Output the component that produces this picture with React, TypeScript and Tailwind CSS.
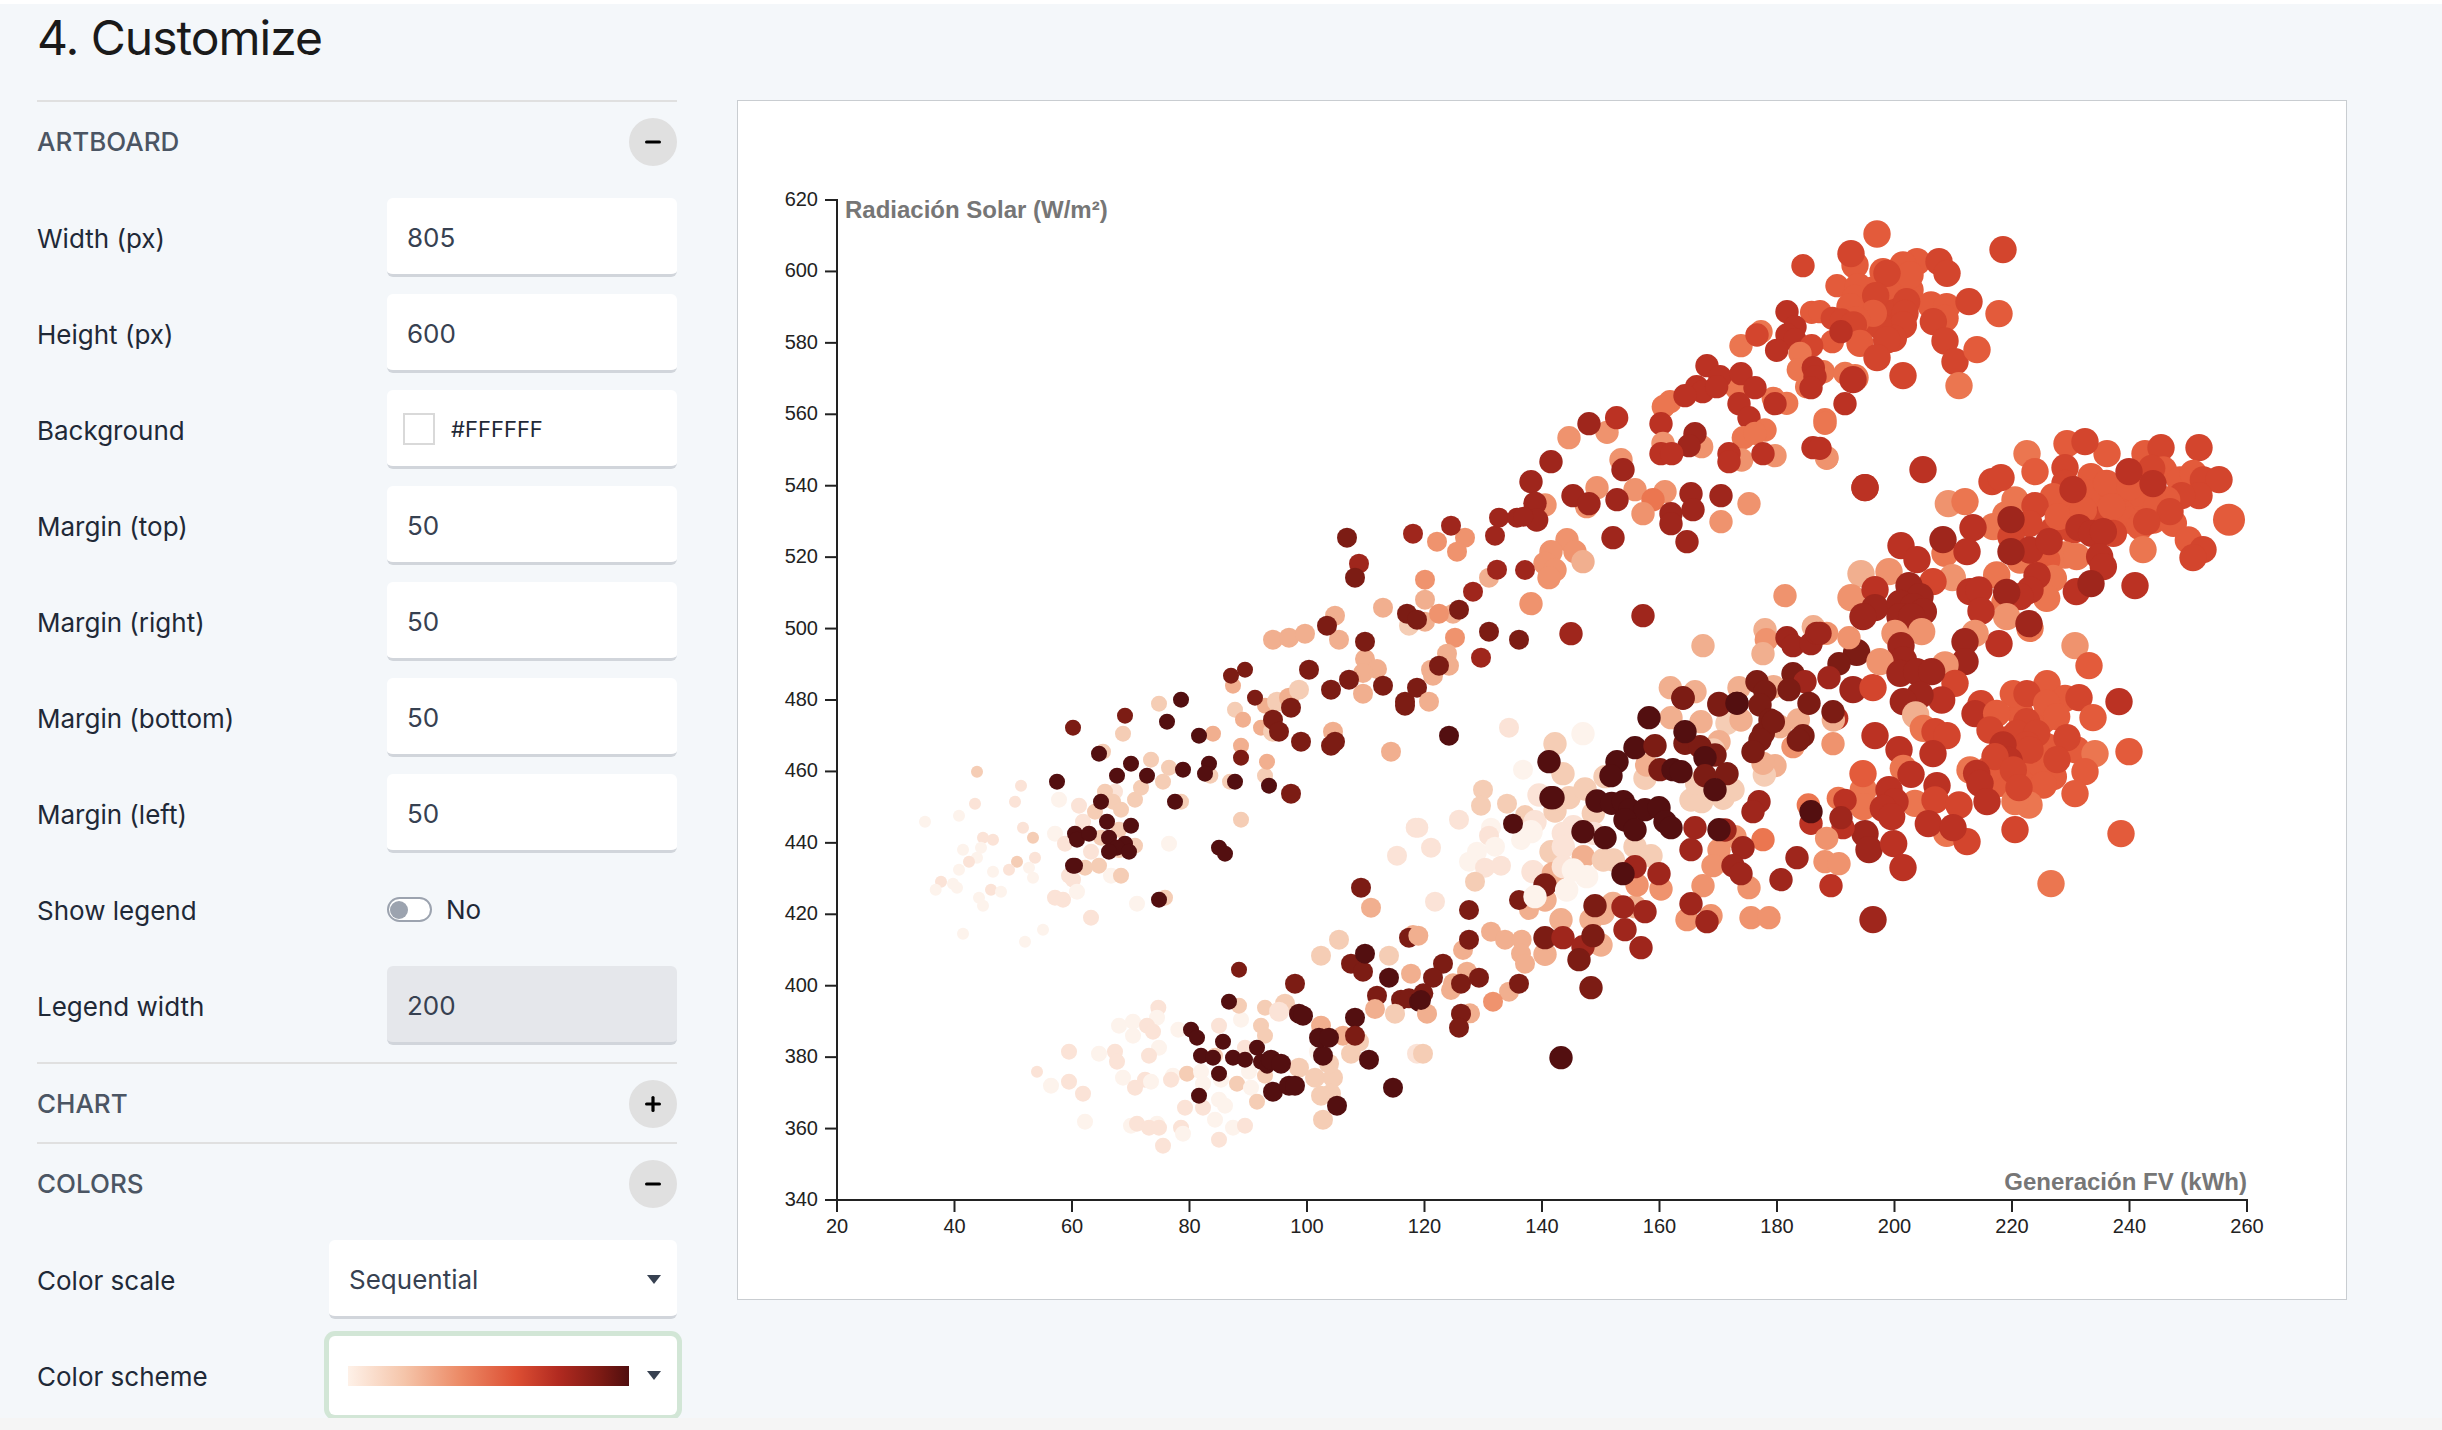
import { Minus, Plus } from 'lucide-react';
import type { ReactNode } from 'react';

const SHADES: Record<string, string> = {
  a: '#fdf3ec',
  b: '#fbe3d7',
  c: '#f5cdb5',
  d: '#f1af8f',
  e: '#ef936e',
  f: '#eb7650',
  g: '#e35b3b',
  h: '#d3452d',
  i: '#bb3223',
  j: '#9f261c',
  k: '#7c1c14',
  l: '#530f10',
};

// dots traced from the chart at 3x, grouped by the area they were read from
const TRACES: { ox: number; oy: number; pts: string }[] = [
  {
    ox: 900,
    oy: 640,
    pts: `231,395,c 363,437,b 225,491,b 345,485,b 177,527,a 75,545,a 369,563,b 399,593,c 249,593,b 279,599,b 189,629,a 243,623,a 231,653,a 207,665,b 405,653,b 351,665,c 327,689,b 177,689,a 279,695,a 387,683,a 399,713,a 123,725,b 159,731,a 171,743,a 107,749,a 273,749,b 303,755,a 237,773,a 249,797,a 189,881,a 429,869,a 375,905,a
    477,479,a 537,497,b 465,581,a 495,611,b 549,545,b 585,515,c 645,455,b 615,455,c 639,485,c 663,509,c 573,635,b 657,569,c 603,593,c 705,479,c 723,443,c 753,359,c 807,383,c 789,425,c 807,611,a 843,485,c 669,281,c 777,191,c 609,335,c 597,677,c 555,683,c 507,707,b 519,719,b 633,707,a 663,707,c 531,755,a 465,773,b 489,779,b 573,833,b 711,791,a 795,773,c 705,617,c 657,630,c 939,281,d 931,407,c 990,425,c
    519,263,k 675,227,k 801,245,l 843,179,l 897,287,l 597,341,l 693,371,l 651,407,l 741,407,l 849,389,l 927,371,l 915,401,l 471,425,l 603,485,l 825,485,l 621,545,l 693,557,l 525,581,l 531,599,l 567,581,l 627,593,l 675,611,l 651,623,l 627,635,l 687,635,l 519,677,l 525,677,l 777,779,l 957,623,l 975,641,l 1005,425,l
    1023,539,c 999,137,d 1005,209,c 1029,239,d 1023,317,d 1083,263,d 1095,197,d 1131,185,c 1167,173,d 1197,149,c 1395,57,d 1431,87,d 1389,99,d 1389,161,d 1095,407,c 1119,275,c 1101,365,d 1299,275,d 1473,335,d
    993,107,k 1035,89,k 1227,89,k 1347,119,k 1293,149,k 1449,137,k 1065,173,k 1173,203,k 1119,239,k 1137,275,k 1203,305,k 1293,317,k 1305,305,k 1023,353,k 1107,437,l 1173,461,k 1515,185,k 1515,197,k 1551,143,k
    1547,563,b 1491,647,b 1413,803,d 1383,743,k
    1539,885,d 1317,899,c 1263,947,c 1467,947,c 1533,1001,d 1353,971,k 1389,995,k 1395,941,l 1527,893,k 1467,1013,l 1185,1031,k 1017,989,k 1431,1067,k 1503,1079,k 1527,1075,k 1557,1085,l
    1425,1107,d 1485,1121,c 1095,1103,c 1155,1091,c 1137,1115,b 1023,1139,a 1017,1097,c 775,1103,b 771,1133,a 657,1157,a 699,1145,a 699,1187,a 741,1157,b 759,1175,b 835,1169,a 957,1157,b 1083,1157,c 1095,1187,c 1263,1157,d 1329,1187,d 1035,1223,b 945,1247,c 1353,1241,c 1377,1205,c 777,1223,a 747,1247,b 645,1235,b 651,1265,b 597,1241,a 507,1235,b 411,1295,b 507,1325,b 453,1337,a 549,1361,b 669,1313,a 735,1319,b 753,1325,a 705,1343,b 819,1307,a 813,1319,b 861,1301,c 903,1295,a 909,1331,a 963,1319,a 1011,1331,c 1047,1295,a 1095,1307,c 1053,1343,a 1197,1283,c 1245,1313,c 1299,1313,c 1287,1271,c 1257,1235,a 1293,1361,c 1263,1367,c 1071,1385,c 957,1379,a 975,1397,a 855,1403,b 909,1403,b 555,1445,a 693,1457,a 711,1451,b 771,1451,a 747,1463,b 777,1463,b 843,1463,b 849,1481,a 945,1439,a 999,1463,a 1035,1457,b 957,1499,b 789,1517,b 1269,1439,c 1551,1241,b
    987,1085,l 873,1169,l 891,1193,l 969,1205,l 903,1247,l 939,1253,l 999,1253,l 1035,1259,l 1071,1223,l 1083,1265,l 1101,1277,l 1113,1259,l 1143,1271,l 957,1301,l 897,1367,l 1119,1355,l 1167,1337,l 1185,1337,l 1311,1397,l 1479,1343,l 1407,1259,l 1269,1247,l 1257,1193,l 1287,1193,l 1365,1133,l 1365,1187,k 1197,1121,l 1209,1127,l`,
  },
  {
    ox: 1100,
    oy: 500,
    pts: `519,419,d 567,413,d 615,401,d 705,347,d 717,419,d 849,323,d 927,377,c 975,365,d 975,299,d 975,239,e 1011,125,e 1095,113,e 1071,155,e 1059,341,d 1017,341,e 1065,413,e 1167,233,d 1041,461,d 1047,497,d 993,509,d 999,527,d 987,605,d
    681,377,k 741,113,k 777,191,j 765,233,k 939,101,j 1053,77,j 1185,107,j 1197,53,j 1251,53,j 1191,209,j 1119,275,j 921,341,k 951,359,k 1077,329,k 1167,395,k 1257,419,k 795,425,k 1017,497,k 1143,473,j`,
  },
  {
    ox: 1520,
    oy: 210,
    pts: `1100,330,h 1130,340,h 1040,330,g 1100,360,h 1090,280,h 1030,290,g 1060,240,g 1170,240,g 1100,230,g
    1071,72,g 1005,165,g 993,131,h 849,167,h 1449,119,h 1191,155,g 1149,165,g 1170,195,g 1089,185,g 1101,190,h 1257,155,h 1281,190,h 951,227,g 1015,230,g 1005,265,g 1067,257,h 1233,285,g 1280,290,g 1347,275,h 1437,311,g 1275,325,g 1240,335,h 1160,275,h 1155,310,h 1150,345,h 1120,385,h 1075,345,h 1060,310,g 990,290,g 1010,330,g 875,307,g 900,305,g 937,325,h 965,330,h 1000,345,h 937,395,g 1020,400,g 963,365,i 801,305,i 825,351,i 801,375,i 825,390,i 770,421,i 875,407,h 1100,390,h 1071,443,h 1149,497,h 1275,393,h 1305,455,h 1371,419,g 1317,527,f
    723,365,f 663,407,f 711,375,h
    840,430,f 835,479,f 910,485,f 860,530,f 880,473,i 885,500,i 873,533,i 975,490,f 1005,503,f 999,509,i
    650,535,f 450,575,f 430,590,f 760,565,f 800,580,f 561,467,i 600,500,i 663,491,i 705,533,i 530,530,i 548,545,i 590,530,i 495,557,i 423,641,i
    657,581,i 687,623,i 765,581,i
    975,581,i 915,629,f
    261,667,e 290,623,i 207,641,j 147,683,e
    429,700,e 545,710,e 525,671,j 507,707,j 423,731,i 455,731,i
    735,660,f 670,683,f 705,670,f
    665,750,e 627,731,i 627,755,i 765,737,e 729,731,i
    921,743,e 879,713,i
    303,749,e 93,755,j 309,779,j 33,815,j 75,885,e 45,880,j 50,930,j 10,920,j
    231,833,e 345,839,e 435,845,e 399,869,f 369,911,e 200,890,e 159,857,j 207,881,j 291,869,j 513,851,j 519,899,j 603,857,j 687,881,e 453,911,j 453,941,j 603,935,e 279,983,j 501,995,j
    141,989,e 93,1025,e 165,1025,e 189,1055,d 75,1060,e 105,1080,e 87,1103,e 15,1080,j 33,1181,e
    369,1217,j 153,1271,j 795,1157,e 1035,833,i
    549,1307,d 735,1259,d 739,1289,e 729,1331,d 880,1250,d 905,1270,e 801,1283,j 819,1307,j 873,1301,j 890,1270,j
    451,1433,d 525,1445,d 657,1433,d 761,1430,d 711,1415,k 735,1445,k 819,1391,k 855,1415,j 807,1439,k 489,1463,k 597,1480,k 651,1480,l`,
  },
  {
    ox: 1420,
    oy: 700,
    pts: `267,83,b 489,101,a 405,131,c 309,209,a 429,221,c 189,269,c 183,317,c 261,311,c 117,359,b -5,383,b 33,443,b 213,383,a 207,407,b 171,455,a 147,485,a 195,503,b 243,497,b 165,545,c 45,605,b 357,285,b 447,293,c 315,345,c 345,365,b 405,333,c 333,395,a 303,420,a 393,455,c 430,400,b 430,440,b 460,380,b 495,267,c 555,230,c 520,340,c 520,400,b 339,515,b 400,520,d 430,500,b 490,470,d 327,630,d 375,600,d 423,659,d 513,659,d 549,640,d 579,610,d 645,620,d 651,555,e 723,567,e 550,480,c 580,480,c 645,440,c 693,467,c 675,235,c 680,195,d 753,53,d 843,65,d 921,70,c 963,60,d 1065,197,d 1033,225,c 1029,190,d 813,300,c 845,305,c 909,295,c 939,270,c 830,250,c 1119,140,e 1135,60,d 1080,80,d 897,125,d 880,150,c
    897,450,e 879,497,e 849,557,e 987,563,e 945,410,e 1029,419,f 801,659,e 873,647,e 993,653,e 1047,653,e 1165,315,f
    213,695,d 255,719,d 305,719,d 303,761,d 315,791,d 375,763,d 129,750,d 141,815,d 543,735,d 267,875,d 219,905,e 99,850,d 93,870,d 150,940,d 21,941,d 9,1061,c -5,707,d
    87,107,l 387,185,l 393,293,l 399,293,l 279,371,l 591,185,l 573,227,l 645,143,l 687,53,l 705,137,k 795,130,k 840,140,k 885,165,k 795,95,l 855,173,l 720,209,k 759,209,l 783,215,l 855,227,k 921,221,k 885,269,l 531,303,l 575,310,l 610,305,l 630,330,l 675,329,l 717,323,l 615,360,l 645,389,l 735,365,l 753,383,l 489,395,l 555,413,l 825,383,j 813,449,j 915,390,j 897,389,l 1017,305,j 999,335,j 1173,370,i 1173,335,l 969,443,j 939,497,j 963,521,j
    645,500,j 609,521,l 717,521,j 375,555,k 297,600,k 147,630,k 525,617,k 609,621,j 675,635,j 615,689,j 663,743,j 147,719,k 375,713,k 429,713,j 489,740,j 519,707,k 477,779,k 69,791,k 39,833,k 123,851,k 177,833,k 297,851,k 513,863,k 10,880,k 3,900,l 123,941,k 117,983,k 423,1073,l 813,611,j 861,665,j 1083,539,j 1131,473,j
    789,-5,k 897,15,k 951,10,l 1020,15,k 1050,60,k 1030,100,k 1060,65,k 1020,120,k 999,155,k 1149,107,k 1135,120,k 1167,10,k
    460,510,a 500,530,a 440,570,a 345,590,a 225,440,a`,
  },
  {
    ox: 1820,
    oy: 420,
    pts: `830,230,g 900,250,g 950,270,g 1000,300,g 840,300,h 760,260,g 700,330,h 920,300,g 840,190,g 760,330,h 960,220,g 600,1000,h 650,1000,g 560,960,h 680,980,g 640,1060,g 600,880,g 670,900,g 540,1090,g 700,1070,g
    621,101,f 645,155,g 741,71,g 861,101,g 795,65,h 975,101,g 1023,83,h 1137,83,h 813,170,g 735,143,h 735,190,h 700,230,g 585,240,f 557,285,f 520,320,f 645,257,h 715,290,g 800,220,g 860,190,g 930,200,g 1030,150,g 995,145,h 1080,180,g 1120,160,g 1150,180,h 1197,179,h 1137,227,h 1085,227,h 1040,240,g 1010,260,g 1060,310,g 1050,275,h 960,320,g 980,305,h 1105,360,g 1149,389,h 1119,413,h 1227,299,g 969,389,f 875,260,g 790,270,g 880,340,h 927,155,i 999,191,i 759,209,i 627,311,h 573,350,h 573,299,j 777,323,i 815,340,i 850,335,i 735,405,f 770,410,f 600,420,f 680,420,g 630,390,i 687,365,i 573,395,j 839,410,i 850,440,i 700,475,f 680,535,f 530,465,f 555,545,f 651,467,i 630,510,i 600,530,i 560,517,j 769,515,i 813,491,j 945,497,i 560,590,e 630,625,f 627,611,j 537,671,i 765,677,e 807,737,g
    135,203,i 309,149,i 385,251,e 435,245,f 516,185,h 543,173,h 375,400,f 369,359,j 459,323,i 441,395,i 243,377,i 291,419,i 123,461,d 207,455,e 397,473,e 339,485,h 93,533,e 165,509,i 165,563,j 129,590,j 267,497,j 300,530,j 240,550,j 280,560,j 310,575,j 240,590,j 275,590,j 450,515,i 477,510,i 483,573,i 465,640,e 305,635,e 225,640,e 435,665,j 435,725,j 243,677,j 250,720,j 110,697,k 87,653,e 57,731,k 27,773,j 99,809,j 159,803,h 180,725,e 375,735,e 405,790,h 240,760,j 290,755,j 335,755,j 365,840,i 300,825,j 250,845,j 287,885,d 50,895,i 40,900,d 39,875,k 39,971,e 310,925,f 345,935,h 381,947,h 165,947,i 237,989,i 339,1001,i
    580,821,g 681,791,g 735,835,g 621,821,h 483,851,h 465,881,i 777,833,h 897,845,i 819,893,g 680,850,g 710,890,g 530,880,g 510,930,h 620,905,h 590,940,h 650,940,h 620,975,h 549,975,i 770,990,g 825,1001,f 741,953,h 660,1030,g 630,990,h 711,1019,h 567,1021,i 927,995,g 795,1055,g 765,1121,g 505,1050,g 525,1010,h 580,1050,h 670,1095,g 627,1155,f 585,1145,f 597,1103,h 585,1229,h 903,1241,g 693,1391,f
    130,1110,f 129,1061,g 130,1160,f 250,1045,f 285,1150,f 450,1050,f 380,1240,f 273,1063,i 351,1097,i 207,1109,i 225,1145,i 190,1165,i 215,1190,i 470,1060,i 480,1090,i 345,1140,h 417,1155,h 501,1145,i 325,1211,i 441,1265,h 399,1223,i 135,1241,j 147,1289,j 221,1271,i 249,1343,i 55,1135,f 75,1141,i 69,1223,i 63,1193,j 20,1255,e 15,1325,e 57,1331,e 33,1397,i 159,1499,j 20,115,e 15,10,f 0,85,i 20,640,e 0,640,j`,
  },
];

const DOTS = TRACES.flatMap(({ ox, oy, pts }) =>
  pts
    .trim()
    .split(/\s+/)
    .map((p) => {
      const [x, y, shade] = p.split(',');
      return { x: ox + Number(x) / 3, y: oy + Number(y) / 3, shade };
    }),
);

function radius(x: number) {
  if (x < 1045) return 6;
  if (x < 1270) return 8;
  if (x < 1530) return 10;
  if (x < 1850) return 11.7;
  if (x < 2220) return 13.7;
  return 16;
}

const X_TICKS = [20, 40, 60, 80, 100, 120, 140, 160, 180, 200, 220, 240, 260];
const Y_TICKS = [340, 360, 380, 400, 420, 440, 460, 480, 500, 520, 540, 560, 580, 600, 620];
const xPos = (v: number) => 837 + ((v - 20) / 240) * 1410;
const yPos = (v: number) => 1200 - ((v - 340) / 280) * 1000;

function Chart() {
  return (
    <svg viewBox="738 101 1608 1198" className="block h-full w-full">
      {DOTS.map((d, i) => (
        <circle key={i} cx={d.x} cy={d.y} r={radius(d.x)} fill={SHADES[d.shade]} />
      ))}
      <g stroke="#222" strokeWidth={2} fill="none">
        <path d="M825 200H837V1200H2247V1212" />
        <path d="M837 1200V1212" />
        {Y_TICKS.map((t) => (
          <path key={t} d={`M825 ${yPos(t)}H837`} />
        ))}
        {X_TICKS.map((t) => (
          <path key={t} d={`M${xPos(t)} 1200V1212`} />
        ))}
      </g>
      <g fill="#222" fontSize={20} fontFamily="'Liberation Sans', Arial, sans-serif">
        {Y_TICKS.map((t) => (
          <text key={t} x={818} y={yPos(t) + 6} textAnchor="end">
            {t}
          </text>
        ))}
        {X_TICKS.map((t) => (
          <text key={t} x={xPos(t)} y={1233} textAnchor="middle">
            {t}
          </text>
        ))}
      </g>
      <g fill="#767676" fontSize={24} fontWeight={700} fontFamily="'Liberation Sans', Arial, sans-serif">
        <text x={845} y={218}>
          Radiación Solar (W/m²)
        </text>
        <text x={2247} y={1190} textAnchor="end">
          Generación FV (kWh)
        </text>
      </g>
    </svg>
  );
}

function RoundToggle({ open }: { open: boolean }) {
  return (
    <button className="flex h-12 w-12 items-center justify-center rounded-full bg-[#e0e0e0] text-black">
      {open ? <Minus size={22} strokeWidth={3.5} /> : <Plus size={22} strokeWidth={3.5} />}
    </button>
  );
}

function SectionHead({ title, open }: { title: string; open: boolean }) {
  return (
    <div className="flex h-12 items-center justify-between">
      <h2 className="mb-[2px] text-[26px] font-medium text-[#4b5563]">{title}</h2>
      <RoundToggle open={open} />
    </div>
  );
}

function Row({ label, children }: { label: string; children: ReactNode }) {
  return (
    <div className="flex h-[79px] items-center justify-between">
      <span className="mt-[1px] text-[26px] text-[#1f2937]">{label}</span>
      {children}
    </div>
  );
}

function NumberField({ label, value, disabled }: { label: string; value: string; disabled?: boolean }) {
  return (
    <Row label={label}>
      <input
        readOnly
        defaultValue={value}
        className={`h-[79px] w-[290px] rounded-md border-b-[3px] border-[#d1d5db] px-5 pt-[3px] text-[26px] text-[#374151] outline-none ${
          disabled ? 'bg-[#e5e7eb]' : 'bg-white'
        }`}
      />
    </Row>
  );
}

function Caret() {
  return (
    <svg width="14" height="9" viewBox="0 0 14 9" className="shrink-0">
      <path d="M0 0H14L7 9Z" fill="#374151" />
    </svg>
  );
}

export default function App() {
  return (
    <div className="h-[1430px] w-full overflow-hidden bg-[#f5f5f5] [font-family:Inter,sans-serif]">
      <div className="h-1 bg-white" />
      <div className="flex h-[1414px] overflow-hidden bg-[#f4f7fa] pl-[37px]">
        <aside className="w-[640px] shrink-0">
          <h1 className="h-[96px] pt-[5px] text-[48px] leading-[58px] tracking-[-1px] text-[#1a1a1a]">4. Customize</h1>

          <section className="border-t-2 border-[#e0e0e0] pt-4">
            <SectionHead title="ARTBOARD" open />
            <div className="mt-8 flex flex-col gap-[17px]">
              <NumberField label="Width (px)" value="805" />
              <NumberField label="Height (px)" value="600" />
              <Row label="Background">
                <div className="flex h-[79px] w-[290px] items-center gap-4 rounded-md border-b-[3px] border-[#d1d5db] bg-white pt-[2px] pl-4">
                  <span className="h-8 w-8 border-2 border-[#d9d9d9] bg-white" />
                  <span className="text-[22px] text-[#1f2937]">#FFFFFF</span>
                </div>
              </Row>
              <NumberField label="Margin (top)" value="50" />
              <NumberField label="Margin (right)" value="50" />
              <NumberField label="Margin (bottom)" value="50" />
              <NumberField label="Margin (left)" value="50" />
              <Row label="Show legend">
                <div className="flex w-[290px] items-center gap-[14px]">
                  <span className="flex h-[25px] w-[45px] items-center rounded-full border-2 border-[#9ca3af] bg-white pl-[1px]">
                    <span className="h-[18px] w-[18px] rounded-full bg-[#9ca3af]" />
                  </span>
                  <span className="text-[26px] text-[#1f2937]">No</span>
                </div>
              </Row>
              <NumberField label="Legend width" value="200" disabled />
            </div>
          </section>

          <section className="mt-[17px] border-t-2 border-[#e0e0e0] pt-4 pb-[14px]">
            <SectionHead title="CHART" open={false} />
          </section>

          <section className="border-t-2 border-[#e0e0e0] pt-4">
            <SectionHead title="COLORS" open />
            <div className="mt-8 flex flex-col gap-[17px]">
              <Row label="Color scale">
                <div className="flex h-[79px] w-[348px] items-center justify-between rounded-md border-b-[3px] border-[#d1d5db] bg-white pt-[2px] pr-4 pl-5">
                  <span className="text-[26px] text-[#374151]">Sequential</span>
                  <Caret />
                </div>
              </Row>
              <Row label="Color scheme">
                <div className="flex h-[79px] w-[348px] items-center justify-between rounded-md bg-white pr-4 pl-[19px] shadow-[0_0_0_5px_#d2e6d6]">
                  <span className="h-5 w-[281px] bg-[linear-gradient(to_right,#fef1e8,#f5c5aa_20%,#ec8a66_40%,#dc4e33_60%,#b12a20_75%,#7c1a14_90%,#500e0e)]" />
                  <Caret />
                </div>
              </Row>
            </div>
          </section>
        </aside>

        <main className="ml-[60px] pt-24">
          <div className="h-[1200px] w-[1610px] border border-[#c9cdd1] bg-white">
            <Chart />
          </div>
        </main>
      </div>
    </div>
  );
}
